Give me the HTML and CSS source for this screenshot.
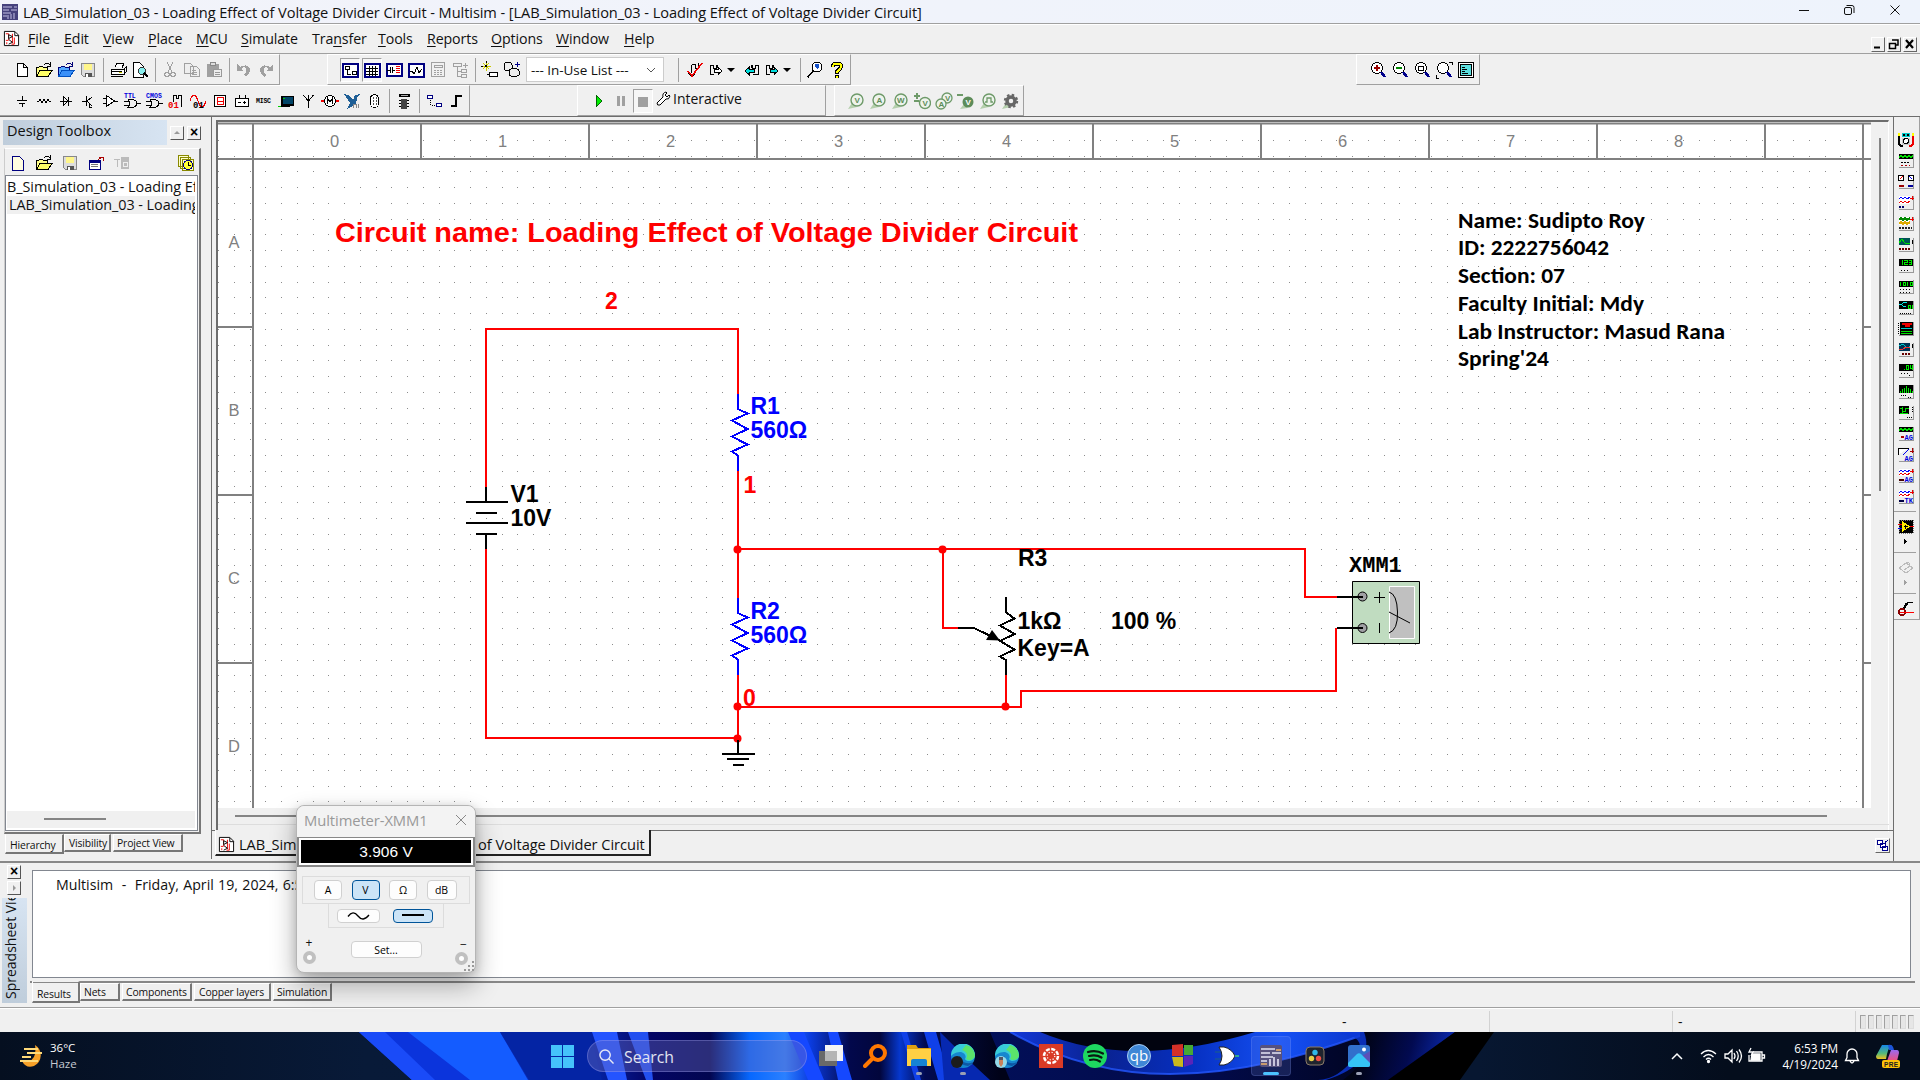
FILE: index.html
```html
<!DOCTYPE html>
<html lang="en">
<head>
<meta charset="utf-8">
<title>LAB_Simulation_03 - Multisim</title>
<link rel="stylesheet" href="styles.css">
</head>
<body>
<svg class="defs" aria-hidden="true">
<defs>
<symbol id="doc" viewBox="0 0 18 18"><path d="M4.5 2.500h6l4 4v9h-10z M10.500 2.500v4h4" fill="#fff" stroke="#000"/></symbol>
<symbol id="open" viewBox="0 0 18 18"><path d="M1.500 14.500v-8h2l1-1h3l1 1h4v3" fill="#ff8" stroke="#000"/><path d="M1.500 15.500l3.500-6h12l-4 6z" fill="#ff6" stroke="#000"/><path d="M9 4q3-3 6 0M15.500 1v4h-4" fill="none" stroke="#000"/></symbol>
<symbol id="openb" viewBox="0 0 18 18"><path d="M1.500 14.500v-8h2l1-1h3l1 1h4v3" fill="#5af" stroke="#007"/><path d="M1.500 15.500l3.500-6h12l-4 6z" fill="#3a90f8" stroke="#0050c0"/><path d="M9 4q3-3 6 0M15.500 1v4h-4" fill="none" stroke="#007"/></symbol>
<symbol id="save" viewBox="0 0 18 18"><path d="M2.500 2.500h13v13h-11l-2-2z" fill="#ddd" stroke="#888"/><path d="M5 3h8v6h-8z" fill="#fff68a"/><path d="M6 12h7v4h-7z" fill="#555"/><path d="M7 13h2v3h-2z" fill="#fff"/></symbol>
<symbol id="ckt" viewBox="0 0 18 18"><path d="M1.500 1.500h11l4 4v11h-15z" fill="#fff" stroke="#000"/><path d="M12.500 2v4h4" fill="none" stroke="#000"/><path d="M3 4h3v7h-3M10 4v10M12 8v7h-3M4 15v-2" fill="none" stroke="#e00"/><path d="M6 5l4 2-4 2zM6 10l4 3-4 2" fill="#fff" stroke="#000"/></symbol>
<symbol id="lens" viewBox="0 0 18 18"><circle cx="8" cy="7" r="5.500" fill="#fff" stroke="#000"/><path d="M12 11l4 5" stroke="#00008b" stroke-width="2.500"/></symbol>
<symbol id="inst" viewBox="0 0 16 15"><path d="M0 0h16v15h-16z" fill="#eee"/><path d="M.5 14.500h15v-14" fill="none" stroke="#999"/></symbol>
<symbol id="vprobe" viewBox="0 0 18 18"><path d="M1 17l4-6 5 4z" fill="#b5cfad"/><circle cx="10" cy="8" r="6" fill="#eef3ec" stroke="#6e9a69" stroke-width="1.400"/></symbol>
<symbol id="edge" viewBox="0 0 24 24"><circle cx="12" cy="12" r="12" fill="#1687cf"/><path d="M0 12a12 12 0 0 1 24-1c0 6-8 8-10 4 2-3-1-7-5-7-5 0-8 3-9 4z" fill="#38cbd8"/><path d="M15 1a12 12 0 0 1 9 10c0 5-6 6-9 4 3-5-1-8-4-9z" fill="#5be36b"/><path d="M8 12c-2 5 2 9 9 10 3-1 5-3 5-4-6 3-12 0-12-5z" fill="#0d58a6"/></symbol>
</defs>
</svg>

<header class="titlebar">
<svg class="appicon" viewBox="0 0 16 16"><path d="M0 0h16v16h-16z" fill="#46417c"/><path d="M1 3h9M1 6h6M9 6h6M1 9h8M12 3h3M1 12h4M6 11v4M9 10v5M12 9v6" stroke="#c3c0e4"/></svg>
<span class="titletext">LAB_Simulation_03 - Loading Effect of Voltage Divider Circuit - Multisim - [LAB_Simulation_03 - Loading Effect of Voltage Divider Circuit]</span>
<svg class="winctl" viewBox="0 0 110 22" fill="none" stroke="#111"><path d="M5 10.500h10"/><rect x="50.500" y="7.500" width="7" height="7" rx="1.500"/><path d="M52.500 5.500h5.500q2 0 2 2v5.500"/><path d="M96.500 5.500l9 9M105.500 5.500l-9 9"/></svg>
</header>

<nav class="menubar">
<svg class="menuicon"><use href="#ckt"/></svg>
<div class="menus"><span><u>F</u>ile</span><span><u>E</u>dit</span><span><u>V</u>iew</span><span><u>P</u>lace</span><span><u>M</u>CU</span><span><u>S</u>imulate</span><span>Tra<u>n</u>sfer</span><span><u>T</u>ools</span><span><u>R</u>eports</span><span><u>O</u>ptions</span><span><u>W</u>indow</span><span><u>H</u>elp</span></div>
<div class="mdictl"><i><svg viewBox="0 0 12 12"><path d="M2 9.500h6" stroke="#000" stroke-width="2"/></svg></i><i><svg viewBox="0 0 12 12"><path d="M4 2h6v5h-2M1.500 5.500h6v5h-6z" fill="none" stroke="#000" stroke-width="1.500"/></svg></i><i><svg viewBox="0 0 12 12"><path d="M2 2l7 8M9 2l-7 8" stroke="#000" stroke-width="2.200"/></svg></i></div>
</nav>

<div class="row">
<div class="bar bar-std">
<svg><use href="#doc"/></svg><svg><use href="#open"/></svg><svg><use href="#openb"/></svg><svg><use href="#save"/></svg><b></b>
<svg viewBox="0 0 18 18"><path d="M6 6l2-4h7l-2 5M2 8h13v5h-13z" fill="#fff" stroke="#000"/><path d="M2 15h12M15 8l2-2v5l-2 2M3 10h10" stroke="#000" fill="none"/><path d="M10 11h3" stroke="#cc0"/></svg>
<svg viewBox="0 0 18 18"><path d="M2.500 1.500h6l4 4v11h-10z" fill="#fff" stroke="#000"/><circle cx="11" cy="10" r="3.500" fill="#8ee" stroke="#333"/><path d="M13 12l4 4" stroke="#000" stroke-width="2.500"/></svg><b></b>
<svg viewBox="0 0 18 18" fill="none" stroke="#a0a0a0" stroke-width="1.300"><path d="M6 1l5 10M12 1l-5 10"/><circle cx="6" cy="13.500" r="2.200"/><circle cx="12" cy="13.500" r="2.200"/></svg>
<svg viewBox="0 0 18 18" fill="#eee" stroke="#a0a0a0"><path d="M1.500 2.500h6l3 3v7h-9zM7.500 5.500h6l3 3v7h-9zM9 9h4M9 11h5M9 13h5"/></svg>
<svg viewBox="0 0 18 18"><path d="M2 3h12v13h-12z" fill="#a0a0a0"/><path d="M5.500 1.500h5v3h-5z" fill="#ddd" stroke="#888"/><path d="M8.500 8.500h8v7h-8zM10 11h5M10 13h5" fill="#eee" stroke="#999"/></svg><b></b>
<svg viewBox="0 0 18 18"><path d="M2 3v7h7l-3-2c4-5 8 0 3 6l2 2c8-7 3-15-6-10z" fill="#a0a0a0"/></svg>
<svg viewBox="0 0 18 18"><path d="M16 3v7h-7l3-2c-4-5-8 0-3 6l-2 2c-8-7-3-15 6-10z" fill="#a0a0a0"/></svg>
</div>
<div class="bar bar-main">
<svg class="on" viewBox="0 0 18 18"><path d="M1.500 2.500h15v13h-15z" fill="#fff" stroke="#000080" stroke-width="2"/><path d="M4 5.500h4v3h-4zM11 10.500h4v3h-4zM6 9v4h4" fill="none" stroke="#000"/></svg>
<svg class="on" viewBox="0 0 18 18"><path d="M1.500 2.500h15v13h-15z" fill="#fff" stroke="#000080" stroke-width="2"/><path d="M3 7.500h12M3 10.500h12M3 13h12M6.500 5v10M9.500 5v10M12.500 5v10" stroke="#000"/></svg>
<svg viewBox="0 0 18 18"><path d="M1.500 2.500h15v12h-15z" fill="#fff" stroke="#000080" stroke-width="2"/><path d="M2 9h3M5.500 6v6M7.500 6v6M8 9h2" stroke="#000"/><path d="M11 5.500h4M11 7.500h4M11 9.500h4M11 11.500h4" stroke="#e00"/></svg>
<svg viewBox="0 0 18 18"><path d="M1.500 2.500h15v13h-15z" fill="#fff" stroke="#000080" stroke-width="2"/><path d="M3 10h2l2 3 3-7 2 6 3-4" fill="none" stroke="#000"/></svg>
<svg viewBox="0 0 18 18" fill="none" stroke="#a0a0a0"><path d="M2.500 1.500h13v14h-13zM5 4h8v2h-8z"/><path d="M5 9h2M8 9h2M11 9h2M5 11h2M8 11h2M11 11h2M5 13h2M8 13h2M11 13h2"/></svg>
<svg viewBox="0 0 18 18" fill="none" stroke="#a0a0a0"><path d="M2.500 2.500h8v3h-8zM10.500 8.500h5v3h-5zM10.500 13.500h5v3h-5zM6 6v9h4M6 10h4M14 2v5M12 4h5"/></svg><b></b>
<svg viewBox="0 0 18 18"><path d="M5 1v9M1 5h9M2 2l6 6M8 2l-6 6" stroke="#cc0"/><path d="M4 4h2v2h-2zM5 0h1v2h-1zM0 5h2v1h-2z"/><path d="M8.500 11.500h8v4h-8zM6 13h2" fill="#fff" stroke="#000"/></svg>
<svg viewBox="0 0 18 18"><g fill="#eee" stroke="#000"><ellipse cx="5" cy="4" rx="4" ry="2.500"/><path d="M1 4v4q4 4 8 0v-4"/><ellipse cx="11" cy="10" rx="5" ry="2.500"/><path d="M6 10v4q5 4 10 0v-4"/></g><path d="M14 1v5M11.500 3.500h5" stroke="#008"/></svg>
<div class="combo">--- In-Use List ---<svg viewBox="0 0 10 10"><path d="M1 3l4 4 4-4" fill="none" stroke="#555"/></svg></div><b class="wideb"></b>
<svg viewBox="0 0 18 18"><path d="M5 12v-8M6 3h3v4h3v-5M2 12l4 4 3-3" fill="none" stroke="#000"/><path d="M2 10l4 5L16 2" fill="none" stroke="#e00" stroke-width="1.600"/></svg>
<svg viewBox="0 0 18 18"><path d="M6 13h-4v-9h3v3h3v-3h1v3" fill="none" stroke="#000"/><path d="M6 8.500h4v-2l4 3.500-4 3.500v-2h-4z" fill="#fff" stroke="#000"/></svg><i class="dd"></i>
<svg viewBox="0 0 18 18"><path d="M11 13h5v-9h-3v3h-3v-3h-1v3" fill="none" stroke="#000"/><path d="M12 8.500h-5v-2l-4 3.500 4 3.500v-2h5z" fill="#0dd" stroke="#000"/></svg>
<svg viewBox="0 0 18 18"><path d="M6 13h-4v-9h3v3h3v-3h1v3" fill="none" stroke="#000"/><path d="M6 8.500h4v-2l4 3.500-4 3.500v-2h-4z" fill="#0dd" stroke="#000"/></svg><i class="dd"></i><b></b>
<svg viewBox="0 0 18 18"><circle cx="11" cy="6" r="5" fill="#fff" stroke="#000"/><path d="M9 3h4v3l-2 2-2-3z" fill="#1450c8"/><path d="M7.500 9.500l-6 7" stroke="#000" stroke-width="1.600"/></svg>
<svg viewBox="0 0 18 18"><path d="M5 6q0-3.500 4-3.500t4 3q0 2-4 5v2M9 14v3" fill="none" stroke="#000" stroke-width="4"/><path d="M5 6q0-3.500 4-3.500t4 3q0 2-4 5v1M9 14.500v2" fill="none" stroke="#ff0" stroke-width="2"/></svg>
</div>
<div class="bar bar-zoom">
<svg viewBox="0 0 18 18"><use href="#lens"/><path d="M5 7h6M8 4v6" stroke="#900" stroke-width="2"/></svg>
<svg viewBox="0 0 18 18"><use href="#lens"/><path d="M5 7h6" stroke="#080" stroke-width="2"/></svg>
<svg viewBox="0 0 18 18"><use href="#lens"/><path d="M5.500 5h5v4h-5z" fill="none" stroke="#000"/></svg>
<svg viewBox="0 0 18 18"><use href="#lens"/><path d="M14 1h3v3M1 14v3h3" fill="none" stroke="#000"/></svg>
<svg viewBox="0 0 18 18"><path d="M1.500 1.500h15v15h-15z" fill="#fff" stroke="#000"/><path d="M3.500 3.500h11v11h-11z" fill="#5ce0e0" stroke="#000"/><path d="M5 6.500h3M5 8.500h5M5 10.500h3M5 12.500h6" stroke="#000"/></svg>
</div>
</div>

<div class="row row2">
<div class="bar bar-comp">
<svg viewBox="0 0 18 18"><path d="M9.500 4v4M4 8.500h10M6 11.500h6M9.500 12v3" stroke="#000" fill="none"/></svg>
<svg viewBox="0 0 18 18"><path d="M2 9h2l1-2 2 4 2-4 2 4 2-4 1 2h2" stroke="#000" fill="none"/></svg>
<svg viewBox="0 0 18 18"><path d="M3 9.500h12M6.500 5v8l5-4zM11.500 5v9" stroke="#000" fill="none"/></svg>
<svg viewBox="0 0 18 18"><path d="M3 9.500h4M7.500 4v10M8 9l5-4M8 9l5 5M10 12v3h3" stroke="#000" fill="none"/></svg>
<svg viewBox="0 0 18 18"><path d="M5.500 3.500v11l8-5.500zM2 6.500h3M2 11.500h3M13 9.500h4" stroke="#000" fill="#fff"/></svg>
<svg viewBox="0 0 18 18"><path d="M5 7.500h4q5 1 5 4t-5 4h-4q3-4 0-8M1 9.500h5M1 13.500h5M14 11.500h4" stroke="#000" fill="none"/><text x="1" y="6" class="pix" fill="#00d">TTL</text></svg>
<svg viewBox="0 0 18 18"><path d="M5 7.500h4q5 1 5 4t-5 4h-4q3-4 0-8M1 9.500h5M1 13.500h5M14 11.500h4" stroke="#000" fill="none"/><text x="1" y="6" class="pix" fill="#00d" textLength="16">CMOS</text></svg>
<svg viewBox="0 0 18 18"><path d="M6.500 10v-7h3v3h2v-3h3v12" stroke="#000" fill="none"/><text x="1" y="16" class="pixb" fill="#e00">01</text></svg>
<svg viewBox="0 0 18 18"><path d="M1 9q4-12 8 0t8 0" stroke="#e00" fill="none"/><text x="4" y="16" class="pixb">01</text></svg>
<svg viewBox="0 0 18 18"><path d="M3.500 3.500h11v11h-11z" stroke="#000" fill="#fff"/><path d="M6 5.500h6v3.500h-6zM6 9h6v3.500h-6z" stroke="#e00" fill="none"/></svg>
<svg viewBox="0 0 18 18"><path d="M2.500 6.500h13v8h-13z" stroke="#000" fill="#fff"/><path d="M6.500 3v4M12.500 3v4M5 10.500h3M10 10.500h3M11.500 9v3" stroke="#000"/></svg>
<svg viewBox="0 0 18 18"><text x="1" y="11" class="pix" textLength="15">MISC</text></svg>
<svg viewBox="0 0 18 18"><path d="M4 4h13v10h-13zM1 14h12v1h-12z"/><path d="M6 5h10v7h-10z" fill="#046"/><path d="M6 6h2M1 14h3" stroke="#0c0"/></svg>
<svg viewBox="0 0 18 18"><path d="M9.500 16v-7L4 3M9.500 9l5-6M9.500 3v5" stroke="#000" fill="none"/></svg>
<svg viewBox="0 0 18 18"><path d="M0 9h4M14 9h4" stroke="#e00" stroke-width="2"/><circle cx="9" cy="9" r="5.500" fill="#fff" stroke="#000"/><path d="M6.500 12v-6l2.500 4 2.500-4v6" fill="none" stroke="#000"/></svg>
<svg viewBox="0 0 18 18"><path d="M1 2l6 2 3 4 2-5 5-1-3 4-1 6-5 3-4 2 3-6z" fill="#1f5f96"/><path d="M10 16v-4h3v4M15 12v4" fill="none" stroke="#888"/></svg>
<svg viewBox="0 0 18 18"><rect x="5.500" y="2.500" width="8" height="13" rx="4" fill="#fff" stroke="#000"/><path d="M8.500 5v8M11.500 5v8" stroke="#555" stroke-dasharray="2 1"/></svg><b></b>
<svg viewBox="0 0 18 18"><path d="M4 2h11v3h-11z"/><path d="M6 3.500h7" stroke="#aaa"/><path d="M6 7h6v10h-6z" fill="#444"/><path d="M4 8.500h10M4 11.500h10M4 14.500h10" stroke="#000" stroke-dasharray="2 6"/></svg><b></b>
<svg viewBox="0 0 18 18"><path d="M2.500 3.500h5v3h-5zM11.500 11.500h5v3h-5z" stroke="#000080" stroke-width="1.500" fill="#fff"/><path d="M5.500 8v5h5" fill="none" stroke="#000" stroke-dasharray="1 1"/></svg>
<svg viewBox="0 0 18 18"><path d="M4 14h5v-10h6" fill="none" stroke="#000" stroke-width="2"/></svg>
</div>
<div class="bar bar-sim">
<svg viewBox="0 0 18 18"><path d="M6 3v12l6-6z" fill="#0e0" stroke="#060"/></svg>
<svg viewBox="0 0 18 18"><path d="M5 4h3v10h-3zM10 4h3v10h-3z" fill="#a0a0a0"/></svg>
<svg class="on" viewBox="0 0 18 18"><path d="M4 5h10v10h-10z" fill="#a0a0a0"/></svg>
<svg class="wrench" viewBox="0 0 18 18"><path d="M3 13l6-6q-1-4 3-5l1 1-2 2 2 2 2-2 1 1q-1 4-4 3l-6 6q-3 1-3-2z" fill="#fff" stroke="#000"/></svg>
<span class="inter">Interactive</span>
</div>
<div class="bar bar-probe">
<svg viewBox="0 0 18 18"><use href="#vprobe"/><text x="7.500" y="11" class="pr">V</text></svg>
<svg viewBox="0 0 18 18"><use href="#vprobe"/><text x="7.500" y="11" class="pr">A</text></svg>
<svg viewBox="0 0 18 18"><use href="#vprobe"/><text x="6" y="11" class="pr">W</text></svg>
<svg viewBox="0 0 18 18"><path d="M1 4h6M4 1v6M1 9h5" stroke="#6e9a69" stroke-width="2"/><circle cx="12" cy="11" r="5.500" fill="#eef3ec" stroke="#6e9a69" stroke-width="1.400"/><text x="9.500" y="14" class="pr">V</text></svg>
<svg viewBox="0 0 18 18"><g fill="#eef3ec" stroke="#6e9a69" stroke-width="1.300"><circle cx="12" cy="6" r="5"/><circle cx="6" cy="12" r="5"/></g><text x="10" y="9" class="pr">V</text><text x="3.500" y="15" class="pr">A</text></svg>
<svg viewBox="0 0 18 18"><path d="M0 3h6" stroke="#6e9a69" stroke-width="2"/><path d="M3 17l4-5 4 4z" fill="#b5cfad"/><circle cx="11" cy="10" r="5.500" fill="#5d8c59"/><text x="8.500" y="13" class="pr w">V</text></svg>
<svg viewBox="0 0 18 18"><use href="#vprobe"/><path d="M6 10h2v-4h4v4h2" fill="none" stroke="#6e9a69" stroke-width="1.300"/></svg>
<svg viewBox="0 0 18 18"><path d="M1 17l4-6 5 4z" fill="#b5cfad"/><circle cx="10" cy="9" r="4" fill="none" stroke="#666" stroke-width="3.500"/><circle cx="10" cy="9" r="6.200" fill="none" stroke="#666" stroke-width="2" stroke-dasharray="2.500 2.370"/></svg>
</div>
</div>

<main class="work">
<aside class="toolbox">
<div class="tbhead"><span>Design Toolbox</span><i class="sb up"></i><i class="sb x">×</i></div>
<div class="tbframe">
<div class="tbicons"><svg viewBox="0 0 18 18"><path d="M3.500 2.500h7l4 4v10h-11z" fill="#fffde0" stroke="#000080"/></svg><svg><use href="#open"/></svg><svg><use href="#save"/></svg><svg viewBox="0 0 18 18"><path d="M2.500 6.500h11v9h-11z" fill="#fff" stroke="#000080"/><path d="M2 7.500h12" stroke="#000080" stroke-width="2"/><path d="M4 10.500h7M4 12.500h7" stroke="#777"/><path d="M12 3h4v4M15 3l-4 3" stroke="#a00" fill="none"/></svg><svg viewBox="0 0 18 18"><path d="M1 5.500h6M4.500 5v8" stroke="#bbb"/><path d="M8 3h8v12h-8z" fill="#bbb"/><path d="M10 8h4v4h-4z" fill="none" stroke="#eee"/></svg><svg class="last" viewBox="0 0 18 18"><path d="M1.500 1.500h10v11h-10zM3.500 3.500h10v11h-10zM5.500 5.500h11v11h-11z" fill="#ffc" stroke="#880"/><circle cx="11" cy="11" r="4.500" fill="#ff3" stroke="#000080"/><path d="M11 8v3h3" fill="none" stroke="#000"/></svg></div>
<div class="tree"><div class="ti">B_Simulation_03 - Loading Effect</div><div class="ti sel">LAB_Simulation_03 - Loading Effect</div><div class="hs"><i></i></div></div>
</div>
<div class="tabs lt"><span class="act">Hierarchy</span><span>Visibility</span><span>Project View</span></div>
</aside>

<section class="mdi">
<div class="docframe">
<svg class="canvas" width="1653" height="686" viewBox="218 122 1653 686">
<defs>
<pattern id="grid" x="234" y="140" width="63" height="63" patternUnits="userSpaceOnUse"><path d="M0 0h1v1h-1zM16 0h1v1h-1zM31 0h1v1h-1zM47 0h1v1h-1zM0 16h1v1h-1zM16 16h1v1h-1zM31 16h1v1h-1zM47 16h1v1h-1zM0 31h1v1h-1zM16 31h1v1h-1zM31 31h1v1h-1zM47 31h1v1h-1zM0 47h1v1h-1zM16 47h1v1h-1zM31 47h1v1h-1zM47 47h1v1h-1z" fill="#8c8c8c"/></pattern>
</defs>
<path d="M218 122h1653v686h-1653z" fill="#fff"/>
<path d="M218 126h1641v682h-1641z" fill="url(#grid)"/>
<path d="M218 123.500h1653M218 159h1653M253 124v684M1863 124v684M421 124v35M589 124v35M757 124v35M925 124v35M1093 124v35M1261 124v35M1429 124v35M1597 124v35M1765 124v35M218 327h35M218 495h35M218 663h35M1863 327h8M1863 495h8M1863 663h8" stroke="#808080" stroke-width="2" fill="none"/>
<g class="rul"><text x="334.500" y="147">0</text><text x="502.500" y="147">1</text><text x="670.500" y="147">2</text><text x="838.500" y="147">3</text><text x="1006.500" y="147">4</text><text x="1174.500" y="147">5</text><text x="1342.500" y="147">6</text><text x="1510.500" y="147">7</text><text x="1678.500" y="147">8</text><text x="234" y="248">A</text><text x="234" y="416">B</text><text x="234" y="584">C</text><text x="234" y="752">D</text></g>
<g fill="none" stroke-width="2" shape-rendering="crispEdges">
<path class="wire" d="M486 487V329H738V394M738 470V598M738 675V738H486V549M738 549H1305V597H1337M943 549V628H959M1336 628V691H1021V707H738M1006 707V675"/>
<path stroke="#00f" d="M738 393.500V409l9.500 4.500-15.500 7 15.500 8.500-15.500 7.500 15.500 8-15.500 7 6 4V471M738 598V613l9.500 4.500-15.500 7 15.500 8.500-15.500 7.500 15.500 8-15.500 7 6 4V675"/>
<path stroke="#000" d="M486 487V502M466 502h42M475.500 513h21.500M466 523h42M475.500 534h21.500M486 534V549M738 739V754M722 754h33M727 759h22M733 765h11M1006 597V612.500l8.500 6-14.500 7 14.500 8.500-14.500 7 14.500 8.500-14.500 7 6 3.500V675M958 628H974L1000 640.500M1337 597H1363M1337 628H1363"/>
</g>
<path d="M986 640l6-10 8 10.500z"/>
<g fill="#f00"><circle cx="737.500" cy="549.500" r="4"/><circle cx="737.500" cy="706.500" r="4"/><circle cx="737.500" cy="738.500" r="4"/><circle cx="942.500" cy="549.500" r="4"/><circle cx="1005.500" cy="706.500" r="4"/></g>
<path d="M738 740v14" stroke="#000" stroke-width="2"/>
<path d="M1352.500 581.500h67v62h-67z" fill="#c0dcc0" stroke="#000"/>
<path d="M1389.500 586.500h25v52h-25z" fill="#c0c0c0" stroke="#fff"/>
<g fill="#a0a0a4" stroke="#000"><circle cx="1362.500" cy="596.500" r="4.500"/><circle cx="1362.500" cy="628" r="4.500"/></g>
<path d="M1350 597h13M1350 628h13" stroke="#000" stroke-width="2"/>
<path d="M1374 597.500h11M1379.500 592v11M1379.500 623v10M1389 592q8 2 8.500 20t-8.500 21M1389 612l21 11" stroke="#000" fill="none"/>
<g class="lab">
<text x="335" y="242" class="head" textLength="743" lengthAdjust="spacingAndGlyphs">Circuit name: Loading Effect of Voltage Divider Circuit</text>
<g fill="#f00"><text x="605" y="309">2</text><text x="743.500" y="493">1</text><text x="743" y="706">0</text></g>
<g fill="#00f"><text x="750.500" y="414">R1</text><text x="750.500" y="438">560Ω</text><text x="750.500" y="619">R2</text><text x="750.500" y="643">560Ω</text></g>
<text x="510.500" y="501.500">V1</text><text x="510.500" y="526">10V</text>
<text x="1018" y="566">R3</text><text x="1017.500" y="629">1kΩ</text><text x="1111" y="629">100 %</text><text x="1017.500" y="655.500">Key=A</text>
</g>
<text x="1349" y="572" class="mono">XMM1</text>
<g class="info"><text x="1458" y="228" textLength="187" lengthAdjust="spacingAndGlyphs">Name: Sudipto Roy</text><text x="1458" y="255" textLength="151" lengthAdjust="spacingAndGlyphs">ID: 2222756042</text><text x="1458" y="283" textLength="107" lengthAdjust="spacingAndGlyphs">Section: 07</text><text x="1458" y="311" textLength="186" lengthAdjust="spacingAndGlyphs">Faculty Initial: Mdy</text><text x="1458" y="339" textLength="267" lengthAdjust="spacingAndGlyphs">Lab Instructor: Masud Rana</text><text x="1458" y="366" textLength="91" lengthAdjust="spacingAndGlyphs">Spring'24</text></g>
</svg>
<div class="vscroll"><i></i></div>
<div class="hscroll"><i></i></div>
</div>
<div class="doctabs"><div class="doctab"><svg><use href="#ckt"/></svg><span>LAB_Simulation_03 - Loading Effect of Voltage Divider Circuit</span></div><i class="cascade"><svg viewBox="0 0 13 13"><path d="M1.500 1.500h5v4h-5zM4.500 4.500h5v4h-5zM6.500 7.500h5v4h-5z" fill="#fff" stroke="#00008b"/><path d="M9 5V2M9 4l3-3" stroke="#00008b"/></svg></i></div>
</section>

<aside class="instruments">
<svg viewBox="0 0 16 15"><path d="M0 0h16v15h-16z" fill="#eee"/><path d="M1 1v4M15 1v4" stroke="#ff0" stroke-width="2"/><path d="M1 4v8l2 2h2" stroke="#000" stroke-width="2" fill="none"/><path d="M15 4v8l-2 2h-2" stroke="#e00" stroke-width="2" fill="none"/><path d="M4 1h8v4h-8z" fill="#0cc"/><path d="M5 2h2v2h-2zM9 2h2v2h-2z"/><path d="M4 6h8v7h-8z" fill="#ccc"/><circle cx="8" cy="9" r="2.500" fill="#fff" stroke="#000"/></svg>
<svg viewBox="0 0 16 15"><use href="#inst"/><path d="M1 1h14v5h-14z"/><path d="M1 5l2-3 2 3 2-3 2 3 2-3 2 3 2-3" stroke="#0d0" fill="none"/><path d="M3 9.500h9" stroke="#000" stroke-dasharray="2 1"/><path d="M3 12.500h9" stroke="#a00" stroke-dasharray="2 2"/></svg>
<svg viewBox="0 0 16 15"><use href="#inst"/><path d="M.5 1.500h5v5h-5zM10.500 1.500h5v5h-5z" fill="#fff" stroke="#000"/><path d="M2 5l3-3" stroke="#e00"/><path d="M11 2l3 3" stroke="#00e"/><path d="M1 12h5" stroke="#900" stroke-width="2"/><path d="M10 12h5" stroke="#009" stroke-width="2"/></svg>
<svg viewBox="0 0 16 15"><use href="#inst"/><path d="M1 1h11v8h-11z" fill="#fff"/><path d="M1 4l2-2 2 2 2-2 2 2 3-2" stroke="#00f" fill="none"/><path d="M1 8l2-2 2 2 2-2 2 2 3-2M14.500 1v4M12 3.500h4" stroke="#e00" fill="none"/><path d="M1 12h5" stroke="#006" stroke-width="2" stroke-dasharray="2 1"/></svg>
<svg viewBox="0 0 16 15"><use href="#inst"/><path d="M1 1h11v8h-11z" fill="#fff"/><path d="M1 4l2-2 2 2 2-2 2 2 3-2" stroke="#080" stroke-width="2" fill="none"/><path d="M1 8l2-2 2 2 2-2 2 2 3-2" stroke="#da0" stroke-width="2" fill="none"/><path d="M14.500 1v4M12 3.500h4" stroke="#e00"/><path d="M1 12h13" stroke="#222" stroke-width="2" stroke-dasharray="2 1"/></svg>
<svg viewBox="0 0 16 15"><use href="#inst"/><path d="M1 1h11v7h-11z" fill="#055"/><path d="M1 6l3-4 3 4h5" stroke="#0d0" fill="none"/><path d="M14.500 3v4" stroke="#000"/><path d="M1 12h12" stroke="#600" stroke-width="2" stroke-dasharray="2 1"/></svg>
<svg viewBox="0 0 16 15"><use href="#inst"/><path d="M1 1h14v7h-14z"/><path d="M4.500 2v5M6 2.500h3v2h-2.500v2h3M11 2.500h2.500v4h-3M11 4.500h3" stroke="#0e0" fill="none"/><path d="M3 12.500h9" stroke="#000" stroke-dasharray="1 2"/></svg>
<svg viewBox="0 0 16 15"><use href="#inst"/><path d="M1 2h14v6h-14z"/><path d="M2.500 3v4M5 3.500h2v3h-2zM9.500 3v4M12 3.500h2v3h-2z" stroke="#0e0" fill="none"/><path d="M2 10.500h12M2 13.500h12" stroke="#000" stroke-dasharray="1 2"/></svg>
<svg viewBox="0 0 16 15"><use href="#inst"/><path d="M1 1h14v8h-14z"/><path d="M1 4.500h3q0-2 3-2h2M4 4.500q0 2 4 2" stroke="#0ee" fill="none"/><path d="M10 5.500h2v3h-2zM14.500 5v4" stroke="#0e0" fill="none"/><path d="M2 13.500h12" stroke="#000" stroke-dasharray="1 1"/></svg>
<svg viewBox="0 0 16 15"><use href="#inst"/><path d="M2 1h13v13h-13z"/><path d="M4 2h10v2h-2v2h-5v-2h-3z" fill="#e00"/><path d="M3 7.500h11" stroke="#0cc"/><path d="M3 10.500h11M3 12.500h11" stroke="#0d0"/><path d="M.5 2v12" stroke="#000" stroke-dasharray="1 1"/></svg>
<svg viewBox="0 0 16 15"><use href="#inst"/><path d="M1 1h11v8h-11z" fill="#035"/><path d="M1 4q4-3 6 0t5 0" stroke="#0cc" fill="none"/><path d="M1 7h4l3-2h4" stroke="#e33" fill="none"/><path d="M14.500 2v4" stroke="#000"/><path d="M4 12h9" stroke="#600" stroke-width="2" stroke-dasharray="2 1"/></svg>
<svg viewBox="0 0 16 15"><use href="#inst"/><path d="M1 1h14v7h-14z"/><path d="M6 6.500h1M8.500 2.500h2v4h-2zM12.500 2v3h2M14.500 2v5" stroke="#0e0" fill="none"/><path d="M3 10.500h8M11 12.500h2" stroke="#000" stroke-dasharray="1 2"/></svg>
<svg viewBox="0 0 16 15"><use href="#inst"/><path d="M1 1h14v8h-14z"/><path d="M2.500 9v-2M4.500 9v-4M6.500 9v-5M8.500 9v-7M10.500 9v-5M12.500 9v-4M14.500 9v-2" stroke="#0e0"/><path d="M3 11.500h5M10 13.500h4" stroke="#000" stroke-dasharray="1 1"/></svg>
<svg viewBox="0 0 16 15"><use href="#inst"/><path d="M1 1h10v8h-10z"/><path d="M2 3.500h2.500v3h3v-3h3M2 8.500h8M4.500 2v6" stroke="#0d0" fill="none"/><path d="M14.500 2v6M9 12.500h5" stroke="#000" stroke-dasharray="1 1"/></svg>
<svg viewBox="0 0 16 15"><use href="#inst"/><path d="M1 1h14v5h-14z"/><path d="M1 5l2-3 2 3 2-3 2 3 2-3 2 3 2-3" stroke="#0d0" fill="none"/><path d="M3 11h3" stroke="#a00" stroke-width="2"/><text x="6.500" y="13.500" class="ag">AG</text></svg>
<svg viewBox="0 0 16 15"><use href="#inst"/><path d="M.5 7.500v-6h10" fill="#fff" stroke="#000"/><path d="M5 8l6-6" stroke="#00e"/><path d="M14.500 1v5M12 4.500h4" stroke="#a00"/><text x="6.500" y="13.500" class="ag">AG</text></svg>
<svg viewBox="0 0 16 15"><use href="#inst"/><path d="M1 1h11v7h-11z" fill="#fff"/><path d="M1 4l2-2 2 2 2-2 2 2 3-2" stroke="#00f" fill="none"/><path d="M1 7l2-2 2 2 2-2 2 2 3-2M14.500 1v4M12 3.500h4" stroke="#e00" fill="none"/><path d="M1 12h5" stroke="#400" stroke-width="2"/><text x="6.500" y="13.500" class="ag">AG</text></svg>
<svg viewBox="0 0 16 15"><use href="#inst"/><path d="M1 1h11v7h-11z" fill="#fff"/><path d="M1 4l2-2 2 2 2-2 2 2 3-2" stroke="#00f" fill="none"/><path d="M1 7l2-2 2 2 2-2 2 2 3-2M14.500 1v4M12 3.500h4" stroke="#e00" fill="none"/><path d="M1 12h5" stroke="#004" stroke-width="2"/><text x="6.500" y="13.500" class="ag">TK</text></svg>
<b></b>
<svg viewBox="0 0 16 15"><path d="M1 1h14v13h-14z" stroke="#777" stroke-dasharray="1 1"/><path d="M4 2v11l8-5.500z" fill="#fe0"/><path d="M0 5.500h4M12 7.500h4" stroke="#e00"/><path d="M0 9.500h4" stroke="#00e"/><path d="M6 7.500h4M7.500 6v4" stroke="#000"/></svg>
<svg class="ar" viewBox="0 0 16 9"><path d="M6 1v7l3-3.500z"/></svg>
<b></b>
<svg viewBox="0 0 16 15"><path d="M1 8l7-5 7 5-7 5zM8 3q4-2 4 3l-6 4" fill="none" stroke="#bbb"/></svg>
<svg class="ar" viewBox="0 0 16 9"><path d="M6 1v7l3-3.500z" fill="#a0a0a0"/></svg>
<b></b>
<svg class="probe" viewBox="0 0 16 15"><path d="M5 9l4-7" stroke="#000" stroke-width="2.500"/><path d="M9 2q3-2 6 0" stroke="#000" fill="none"/><circle cx="4" cy="11" r="3" fill="none" stroke="#800" stroke-width="1.800"/><path d="M2 11.500h14" stroke="#f00"/></svg>
</aside>
</main>

<section class="sheet">
<div class="sidecap"><i class="sb x">×</i><i class="sb rt"></i><div class="vcap"><span>Spreadsheet View</span></div></div>
<div class="sheetmain">
<div class="log">Multisim&nbsp; -&nbsp; Friday, April 19, 2024, 6:53:06 PM</div>
<div class="tabs bt"><span class="act">Results</span><span>Nets</span><span>Components</span><span>Copper layers</span><span>Simulation</span></div>
</div>
</section>

<footer class="status"><span class="c1">-</span><span class="c2"></span><span class="c3">-</span><span class="c4"><i></i><i></i><i></i><i></i><i></i><i></i><i></i></span></footer>

<footer class="taskbar">
<svg class="wall" viewBox="0 0 1920 48" preserveAspectRatio="none">
<defs>
<linearGradient id="base"><stop offset="0" stop-color="#050f20"/><stop offset=".19" stop-color="#081a38"/><stop offset=".77" stop-color="#071731"/><stop offset=".9" stop-color="#040d1c"/><stop offset="1" stop-color="#040d1c"/></linearGradient>
<linearGradient id="mid" gradientUnits="userSpaceOnUse" x1="500" y1="0" x2="1000" y2="0"><stop offset="0" stop-color="#0c33c8"/><stop offset=".2" stop-color="#0420a0"/><stop offset=".3" stop-color="#040565"/><stop offset=".42" stop-color="#020650"/><stop offset=".5" stop-color="#0768ff"/><stop offset=".57" stop-color="#2b80ff"/><stop offset=".62" stop-color="#0b3ce0"/><stop offset=".7" stop-color="#02084c"/><stop offset=".76" stop-color="#02063c"/><stop offset=".8" stop-color="#0638cf"/><stop offset=".85" stop-color="#020a50"/><stop offset=".91" stop-color="#020a3a"/><stop offset="1" stop-color="#000218"/></linearGradient>
<linearGradient id="arc" gradientUnits="userSpaceOnUse" x1="1010" y1="0" x2="1370" y2="0"><stop offset="0" stop-color="#1238d8"/><stop offset=".25" stop-color="#0a2290"/><stop offset=".5" stop-color="#062fc0"/><stop offset=".75" stop-color="#1450f4"/><stop offset="1" stop-color="#0b34c8"/></linearGradient>
<linearGradient id="low" x2="1"><stop offset="0" stop-color="#020f58"/><stop offset=".5" stop-color="#020a48"/><stop offset="1" stop-color="#00020e"/></linearGradient>
<linearGradient id="rt" gradientUnits="userSpaceOnUse" x1="1365" y1="0" x2="1450" y2="24"><stop offset="0" stop-color="#000314"/><stop offset=".55" stop-color="#020a50"/><stop offset="1" stop-color="#0b2ab0"/></linearGradient>
</defs>
<path d="M0 0h1920v48h-1920z" fill="url(#base)"/>
<path d="M359 0h660v48h-607z" fill="url(#mid)"/>
<path d="M359 0h141v48h-88z" fill="#0b34dc"/><path d="M359 0h26l50 48h-23z" fill="#1a4bf8"/><path d="M408 0h92l28 48h-58z" fill="#145cff"/>
<path d="M500 0h90l12 48h-73z" fill="#0424a4"/><path d="M592 0h25l10 48h-19z" fill="#2454ff"/><path d="M628 0h20l5 48h-7z" fill="#2350f0"/>
<path d="M788 0h16l20 48h-16zM832 0h6l14 48h-14l-10-48z" fill="#1548ff"/><path d="M901 0h6l14 48h-6zM924 0h12l14 48h-12z" fill="#1040e8"/>
<path d="M940 0q30 30 50 48h-46z" fill="#0628b0"/>
<path d="M990 0h460v48h-440z" fill="url(#low)"/>
<path d="M1010 0q75 42 160 42t190-38v-4z" fill="url(#arc)"/>
<path d="M1040 0q90 38 215 0z" fill="#01030f"/>
<path d="M1010 0q75 42 160 42t190-38" fill="none" stroke="#2458ff" stroke-width="2" opacity=".8"/>
<path d="M1365 0h90l-62 48h-50q32-24 22-48z" fill="url(#rt)"/><path d="M1340 2q26 2 18 20-20 26-40 26h8q50-16 38-48h-20z" fill="#0d38d8" opacity=".8"/>
<path d="M1455 0h39l-34 48h-72z" fill="#000"/>
</svg>
<div class="weather"><svg viewBox="0 0 24 24"><path d="M16 1a12 12 0 0 1-1 21Q7 25 3 17h7q8-2 6-16z" fill="#f7a028"/><path d="M5 5h14M8 9h15M3 13h9M1 17h18" stroke="#ffd978" stroke-width="2"/></svg><div><div>36°C</div><div class="dim">Haze</div></div></div>
<div class="center">
<svg class="win" viewBox="0 0 24 24"><path d="M0 0h11.500v11.500h-11.500zM12.500 0h11.500v11.500h-11.500zM0 12.500h11.500v11.500h-11.500zM12.500 12.500h11.500v11.500h-11.500z" fill="#45c3fb"/></svg>
<div class="search"><svg viewBox="0 0 16 16"><circle cx="6.500" cy="6.500" r="5.500" fill="none" stroke="#e8eaf6" stroke-width="1.500"/><path d="M10.500 10.500l5 5" stroke="#e8eaf6" stroke-width="1.500"/></svg>Search</div>
<div class="apps">
<span><svg viewBox="0 0 24 24"><path d="M0 7h18v15h-18z" fill="#696969"/><path d="M6 1h18v16h-18z" fill="#f4f4f4"/><path d="M6 7h12v10h-12z" fill="#b5b5b5"/></svg></span>
<span><svg viewBox="0 0 24 24"><circle cx="15" cy="9" r="7" fill="none" stroke="#ff7800" stroke-width="4"/><path d="M10 14l-8 8" stroke="#ff7800" stroke-width="4" stroke-linecap="round"/></svg></span>
<span class="run"><svg viewBox="0 0 24 24"><path d="M0 1h9l2 3h13v18h-24z" fill="#e0a010"/><path d="M0 5h24v17h-24z" fill="#ffd044"/><path d="M4 22v-5q0-2 2-2h12q2 0 2 2v5z" fill="#1683d4"/></svg></span>
<span class="run"><svg viewBox="0 0 24 24"><use href="#edge"/><circle cx="6" cy="18" r="6" fill="#1c1c1c"/></svg></span>
<span><svg viewBox="0 0 24 24"><use href="#edge"/><circle cx="6" cy="18" r="6" fill="#94d9e8"/><path d="M4 14h4v6l-2 3-2-3z" fill="#c9805a"/><path d="M4 13h4v3h-4z" fill="#556"/></svg></span>
<span><svg viewBox="0 0 24 24"><path d="M0 0h24v24h-24z" fill="#d93a26"/><circle cx="12" cy="12" r="7" fill="none" stroke="#fff" stroke-width="2.500" stroke-dasharray="4 1.500"/><circle cx="12" cy="12" r="3.800" fill="none" stroke="#fff" stroke-width="1.200" stroke-dasharray="1.200 1.800"/></svg></span>
<span><svg viewBox="0 0 24 24"><circle cx="12" cy="12" r="12" fill="#1ed760"/><path d="M5 8q8-2.500 15 1.500M6 12q7-2 12.500 1.500M7 16q5.500-1.500 10 1.500" fill="none" stroke="#0a1a10" stroke-width="2.200" stroke-linecap="round"/></svg></span>
<span><svg viewBox="0 0 24 24"><circle cx="12" cy="12" r="11.500" fill="#3f87d6" stroke="#a9cdf3"/><text x="12" y="17" class="qb">qb</text></svg></span>
<span><svg viewBox="0 0 24 24"><path d="M1 1l11-1v12h-11z" fill="#d33028"/><path d="M13 1h9v10h-9z" fill="#47a834"/><path d="M1 13h11v10l-9-1z" fill="#c9b81e"/><path d="M13 12h9v8l-9 3z" fill="#5a24b8"/></svg></span>
<span><svg viewBox="0 0 24 24"><path d="M0 8h7M0 15h7" stroke="#1d6080"/><path d="M4 3h5q8 2 11 9-3 7-11 9h-5q6-9 0-18z" fill="#fff" stroke="#222"/><path d="M20 12h4" stroke="#3ec97a" stroke-width="1.500"/></svg></span>
<span class="cur"><svg viewBox="0 0 24 24"><rect x="1" y="1" width="22" height="22" rx="2" fill="#56517e"/><path d="M2 5h14M2 9h9M13 9h9M2 13h12M2 17h6M11 15v7M15 13v9M19 15v7" stroke="#e4e2f4" stroke-width="1.600"/><path d="M17 6h5M2 20h6" stroke="#f0b46a" stroke-width="1.600"/></svg></span>
<span><svg viewBox="0 0 24 24"><rect x="3" y="3" width="18" height="18" rx="4" fill="#20242e" stroke="#8a7a68"/><circle cx="12" cy="8.500" r="2.700" fill="#30b8e8"/><circle cx="8.500" cy="14.500" r="2.700" fill="#e8d046"/><circle cx="15.500" cy="14.500" r="2.700" fill="#f04e44"/></svg></span>
<span class="run"><svg viewBox="0 0 24 24"><rect x="1" y="1" width="22" height="22" rx="3" fill="#3170cc"/><path d="M23 7v14q0 2-2 2h-18q-2 0-2-2z" fill="#5b50b8"/><path d="M1 19l9-9q2-1.500 4 0l9 9v2q0 2-2 2h-18q-2 0-2-2z" fill="#35c4f5"/><circle cx="17" cy="5.500" r="2" fill="#fff"/></svg></span>
</div>
</div>
<div class="tray">
<svg class="chev" viewBox="0 0 12 8"><path d="M1 7l5-5 5 5" fill="none" stroke="#fff" stroke-width="1.500"/></svg>
<svg class="net" viewBox="0 0 66 18" fill="none" stroke="#fff" stroke-width="1.300"><path d="M1 7q7-7 15 0M3.500 10q5-5 10 0M6 12.500q2.500-2.500 5 0"/><circle cx="8.500" cy="14.500" r="1" fill="#fff"/><path d="M25 7h3l4-4v12l-4-4h-3zM34 6q2 3 0 6M36.500 4q3.500 5 0 10M39 2.500q5 6.500 0 13"/><path d="M53 5h9v9h-13v-6M62.500 8h2v3h-2" /><path d="M52 7h8v6h-9z" fill="#fff"/><path d="M51 1l-2 4h4l-2 4"/></svg>
<div class="clock"><div>6:53 PM</div><div>4/19/2024</div></div>
<svg class="bell" viewBox="0 0 16 16"><path d="M1.500 12.500l1.500-3v-3.500a5 5 0 0 1 10 0v3.500l1.500 3zM6 13q2 4 4 0" fill="none" stroke="#fff" stroke-width="1.300"/></svg>
<svg class="copilot" viewBox="0 0 24 24"><defs><linearGradient id="cp" y2="1" x2="0"><stop stop-color="#1587e8"/><stop offset=".6" stop-color="#55b97a"/><stop offset="1" stop-color="#f0c020"/></linearGradient><linearGradient id="cq" y2="1" x2="0"><stop stop-color="#9a6af0"/><stop offset="1" stop-color="#f0507a"/></linearGradient></defs><path d="M6 1h10q-4 2-6 14h-8q-2 0-2-3z" fill="url(#cp)"/><path d="M12 1q5-1 6 5h-5z" fill="#1c54d8"/><path d="M15 6h6q2 0 2 3l-2 8h-10z" fill="url(#cq)"/><rect x="6" y="16" width="18" height="8" rx="2" fill="#ffc20a"/><text x="8" y="22.600" class="pre" textLength="14">PRE</text></svg>
</div>
</footer>

<div class="meter">
<div class="mhead"><span>Multimeter-XMM1</span><svg viewBox="0 0 12 12"><path d="M1 1l10 10M11 1l-10 10" stroke="#888"/></svg></div>
<div class="disp">3.906 V</div>
<div class="grp g1"><button>A</button><button class="p">V</button><button>Ω</button><button>dB</button></div>
<div class="grp g2"><button><svg viewBox="0 0 24 10"><path d="M1 5.500q5-7 10-.5t11-1" fill="none" stroke="#000" stroke-width="1.300"/></svg></button><button class="p"><svg viewBox="0 0 24 10"><path d="M1 4h22" stroke="#000" stroke-width="2"/></svg></button></div>
<div class="ends"><div class="term">+<i></i></div><button>Set...</button><div class="term r"><em>−</em><i></i></div></div>
<svg class="grip" viewBox="0 0 10 10"><path d="M8 0h2v2h-2zM4 4h2v2h-2zM8 4h2v2h-2zM0 8h2v2h-2zM4 8h2v2h-2zM8 8h2v2h-2z" fill="#999"/></svg>
</div>
</body>
</html>
```
FILE: styles.css
```css
* { box-sizing: border-box; }
html, body { margin: 0; width: 1920px; height: 1080px; overflow: hidden; }
body { display: flex; flex-direction: column; position: relative; background: #f0f0f0; color: #111; font: 14px "Open Sans", "Noto Sans", sans-serif; }
svg { display: block; flex: none; }
i, b { font-style: normal; flex: none; }
.defs { position: absolute; width: 0; height: 0; }
.bar > svg, .tbicons svg, .instruments svg, .cascade svg { shape-rendering: crispEdges; }
.bar-probe > svg, .bar > .wrench { shape-rendering: auto; }

/* title and menus */
.titlebar { height: 24px; flex: none; display: flex; align-items: center; background: linear-gradient(90deg, #f2f3fa, #eef3fc); border-bottom: 1px solid #a0a0a0; padding-left: 2px; }
.appicon { width: 16px; height: 16px; }
.titletext { margin-left: 5px; white-space: nowrap; font-size: 14.600px; letter-spacing: -.075px; }
.winctl { width: 110px; height: 22px; margin-left: auto; margin-right: 16px; margin-top: -2px; }
.menubar { height: 30px; flex: none; display: flex; align-items: center; border-top: 1px solid #fff; border-bottom: 1px solid #a0a0a0; padding-left: 3px; }
.menuicon { width: 17px; height: 17px; margin-top: -2px; }
.menus { display: grid; grid-template-columns: 36px 39px 45px 48px 45px 71px 66px 49px 64px 65px 68px 60px; margin: -2px 0 0 8px; font-size: 14.200px; letter-spacing: -.1px; }
.menus u { text-underline-offset: 2px; }
.mdictl { margin-left: auto; margin-right: 3px; margin-top: 10px; display: flex; gap: 2px; }
.mdictl i { width: 14px; height: 15px; border: 1px solid #fff; border-right-color: #666; border-bottom-color: #666; }
.mdictl svg { width: 12px; height: 12px; }

/* toolbars */
.row { height: 31px; flex: none; display: flex; }
.bar { height: 31px; flex: none; display: flex; align-items: center; border: 1px solid #fff; border-right-color: #a0a0a0; border-bottom-color: #a0a0a0; }
.bar > svg { width: 18px; height: 18px; margin: 0 2px; }
.bar > b { width: 1px; height: 24px; background: #a0a0a0; margin: 0 3.500px; }
.bar > .on { width: 20px; height: 24px; padding: 2px 0; margin: 0 1px; border: 1px solid #a0a0a0; border-right-color: #fff; border-bottom-color: #fff; background: #f6f6f6; }
.bar-std { width: 280px; padding-left: 11px; border-left: 0; }
.bar-main { width: 524px; margin-left: 47px; padding-left: 11px; }
.bar-zoom { width: 124px; margin-left: 505px; padding-left: 10px; }
.combo { width: 138px; height: 25px; flex: none; margin: 0 0 0 3px; padding: 0 7px 0 4px; display: flex; justify-content: space-between; align-items: center; white-space: nowrap; background: #fff; border: 1px solid #ccc; font-size: 13.500px; letter-spacing: -.05px; }
.combo svg { width: 10px; height: 10px; }
.bar > .wideb { margin: 0 5px 0 14px; }
.dd { width: 8px; height: 0; border-top: 4px solid #000; border-left: 4px solid transparent; border-right: 4px solid transparent; margin: 0 5px 0 -1px; }
.bar-comp { width: 470px; padding-left: 11px; border-left: 0; }
.bar-sim { width: 249px; margin-left: 107px; padding-left: 10px; }
.bar-sim > .wrench { margin: 0 0 4px; }
.inter { margin: -4px 0 0 1px; }
.bar-probe { width: 190px; margin-left: 8px; padding-left: 10px; }
.pix { font: bold 6.500px "Liberation Mono", monospace; }
.pixb { font: bold 9px "Liberation Mono", monospace; }
.pr { font: bold 8px "Liberation Sans", sans-serif; fill: #5d8c59; }
.pr.w { fill: #fff; }

/* work area */
.work { height: 746px; flex: none; display: flex; border-top: 1px solid #6d6d6d; }
.toolbox { width: 212px; padding: 3px 0 0 3px; border-right: 1px solid #6d6d6d; height: 742px; }
.tbhead { display: flex; align-items: center; height: 25px; width: 198px; gap: 3px; }
.tbhead span { width: 165px; height: 25px; line-height: 22px; padding-left: 4px; font-size: 14.500px; background: linear-gradient(90deg, #bfcddb, #d7e4f2); }
.sb { width: 14px; height: 14px; border: 1px solid #fff; border-right-color: #555; border-bottom-color: #555; display: block; font: bold 14px/11px "Liberation Sans", sans-serif; text-align: center; color: #000; }
.up::after { content: ""; display: block; margin: 4px auto 0; width: 0; border: 3px solid transparent; border-bottom-color: #999; border-top: 0; }
.rt::after { content: ""; display: block; margin: 3px 0 0 5px; width: 0; border: 3px solid transparent; border-left-color: #999; border-right: 0; }
.tbframe { margin: 3px 0 0 1px; width: 197px; height: 686px; border: 1px solid #fff; border-right: 2px solid #777; border-bottom: 2px solid #777; border-left-color: #ccc; }
.tbicons { height: 26px; display: flex; align-items: center; padding: 2px 4px 0; gap: 8px; }
.tbicons svg { width: 18px; height: 18px; }
.tbicons .last { margin-left: auto; }
.tree { height: 656px; border: 1px solid #828790; background: #fff; padding: 2px 2px 2px 1px; margin-right: 1px; display: flex; flex-direction: column; overflow: hidden; }
.ti { height: 18px; line-height: 18px; white-space: nowrap; overflow: hidden; font-size: 14.400px; letter-spacing: -.05px; padding-left: 0; }
.ti.sel { background: #f0f0f0; padding-left: 2px; }
.hs { margin-top: auto; height: 17px; background: #f0f0f0; }
.hs i { display: block; width: 62px; height: 2px; margin: 7px 0 0 37px; background: #858585; }
.tabs { display: flex; font-size: 10.400px; white-space: nowrap; letter-spacing: -.15px; }
.tabs span { height: 18px; line-height: 17px; padding: 0 4px; border: 1px solid #fff; border-right: 2px solid #777; border-bottom: 2px solid #777; flex: none; }
.tabs .act { height: 20px; line-height: 20px; border-top-color: #f0f0f0; }
.lt { margin-left: 2px; gap: 2px; }
.lt span:nth-child(1) { width: 59px; } .lt span:nth-child(2) { width: 47px; margin-left: -2px; } .lt span:nth-child(3) { width: 70px; padding-left: 3px; }
.mdi { width: 1682px; display: flex; flex-direction: column; padding: 3px 0 0 4px; height: 746px; border-right: 1px solid #6d6d6d; }
.docframe { height: 712px; display: grid; grid-template-columns: 1653px 18px; grid-template-rows: 686px 17px; border-top: 2px solid #6d6d6d; border-left: 2px solid #6d6d6d; border-right: 1px solid #fff; width: 1673px; align-content: start; }
.vscroll i { display: block; width: 2px; height: 353px; margin: 16px 0 0 8px; background: #858585; }
.hscroll { grid-column: 1 / 3; border-bottom: 1px solid #ddd; }
.hscroll i { display: block; width: 1592px; height: 2px; margin: 7px 0 0 17px; background: #858585; }
.doctabs { display: flex; justify-content: space-between; border-top: 1px solid #6d6d6d; margin: -2px 0 0 -4px; padding-left: 3px; height: 31px; }
.doctab { width: 436px; height: 26px; margin-top: -1px; background: #f0f0f0; border-right: 2px solid #222; border-bottom: 2px solid #222; border-left: 1px solid #fff; display: flex; align-items: center; padding: 4px 0 0 2px; white-space: nowrap; font-size: 14.600px; letter-spacing: -.04px; }
.doctab svg { width: 17px; height: 17px; margin-right: 4px; }
.cascade { width: 15px; height: 15px; margin: 7px 3px 0 0; border: 1px solid #fff; border-right-color: #666; border-bottom-color: #666; }
.cascade svg { width: 13px; height: 13px; }
.canvas text { white-space: pre; }
.canvas .rul text { font: 16.500px "Liberation Sans", Arial, sans-serif; fill: #808080; text-anchor: middle; }
.wire { stroke: #f00; }
.lab text { font: bold 23px "Liberation Sans", Arial, sans-serif; }
.lab text.head { font-size: 27.500px; fill: #f00; }
.mono { font: bold 22px "Liberation Mono", monospace; }
.info text { font: bold 22px Carlito, Calibri, Lato, sans-serif; }
.instruments { width: 26px; height: 503px; padding: 15px 0 0 4px; display: flex; flex-direction: column; gap: 6px; border-right: 1px solid #a0a0a0; border-bottom: 1px solid #a0a0a0; }
.instruments svg { width: 16px; height: 15px; }
.instruments b { width: 22px; height: 1px; margin: 1px 0 1px -4px; background: #a0a0a0; }
.instruments .ar { height: 9px; margin: -3px 0 -1px; }
.ag { font: bold 7px "Liberation Mono", monospace; fill: #00d; }

/* spreadsheet view */
.sheet { height: 147px; flex: none; display: flex; border-top: 2px solid #888; border-bottom: 1px solid #a0a0a0; margin-top: -1px; }
.sidecap { width: 30px; padding: 2px 0 0 7px; display: flex; flex-direction: column; gap: 2px; }
.vcap { margin: 1px 0 0 -5px; width: 25px; height: 105px; background: linear-gradient(#d7e4f2, #bfcddb); display: flex; overflow: hidden; justify-content: flex-end; flex-direction: column; }
.vcap span { writing-mode: vertical-rl; transform: rotate(180deg); white-space: nowrap; font-size: 14px; line-height: 17px; padding-top: 4px; height: 118px; flex: none; }
.sheetmain { width: 1885px; }
.log { margin: 7px 4px 0 2px; height: 108px; background: #fff; border: 1px solid #828790; padding: 4px 23px; font-size: 14.200px; word-spacing: .6px; }
.bt { border-top: 2px solid #888; margin-top: 3px; padding-left: 2px; gap: 2px; }
.bt .act { width: 48px; margin-top: -2px; height: 22px; line-height: 24px; }
.bt span:nth-child(2) { width: 40px; margin-left: -2px; padding-left: 3px; } .bt span:nth-child(3) { width: 70px; padding-left: 3px; } .bt span:nth-child(4) { width: 77px; padding-left: 4px; } .bt span:nth-child(5) { width: 59px; padding-left: 3px; }

/* status bar */
.status { height: 24px; flex: none; display: flex; border-top: 1px solid #fff; padding-top: 2px; align-items: stretch; line-height: 21px; }
.c1 { width: 1490px; padding-left: 1342px; border-right: 1px solid #d2d2d2; }
.c2 { width: 183px; border-right: 1px solid #d2d2d2; }
.c3 { width: 183px; padding-left: 5px; border-right: 1px solid #d2d2d2; }
.c4 { display: flex; gap: 2px; padding: 4px 0 3px 4px; }
.c4 i { width: 6px; border: 1px solid #a0a0a0; border-right-color: #ddd; border-bottom-color: #ddd; background: #e6e6e6; }

/* taskbar */
.taskbar { height: 48px; flex: none; display: flex; position: relative; color: #fff; }
.wall { position: absolute; inset: 0; width: 1920px; height: 48px; }
.weather, .center, .tray { position: relative; display: flex; align-items: center; }
.weather { width: 551px; padding-left: 19px; gap: 7px; font-size: 11.500px; line-height: 16px; }
.weather svg { width: 24px; height: 24px; }
.dim { color: #c5cad2; }
.center { width: 830px; }
.win { width: 23px; height: 23px; }
.search { width: 220px; height: 32px; margin: 0 2px 0 13px; border-radius: 16px; background: rgba(110, 110, 190, .38); border: 1px solid rgba(180, 180, 255, .3); display: flex; align-items: center; padding: 1px 0 0 11px; gap: 10px; font-size: 15.800px; color: #e2e4f2; }
.search svg { width: 15px; height: 15px; }
.apps { display: flex; }
.apps span { width: 40px; height: 40px; margin: 0 2px; display: flex; align-items: center; justify-content: center; position: relative; border-radius: 4px; }
.apps svg { width: 24px; height: 24px; }
.run::after, .cur::after { content: ""; position: absolute; bottom: 1px; left: 17px; width: 6px; height: 3px; border-radius: 2px; background: #9aa0b4; }
.cur { background: rgba(120, 150, 240, .18); border: 1px solid rgba(150, 170, 255, .2); }
.cur::after { left: 11px; bottom: 0; width: 16px; background: #4cc2ff; }
.qb { font: 15px "Open Sans", sans-serif; fill: #fff; text-anchor: middle; }
.tray { width: 539px; padding-left: 290px; }
.chev { width: 12px; height: 8px; }
.net { width: 66px; height: 18px; margin-left: 17px; }
.clock { width: 68px; margin-left: 4px; text-align: right; font-size: 11.800px; line-height: 16px; letter-spacing: -.05px; }
.bell { width: 16px; height: 16px; margin-left: 6px; }
.copilot { width: 24px; height: 24px; margin-left: 16px; }
.pre { font: bold 6.500px "Liberation Sans", sans-serif; fill: #222; }

/* floating multimeter window */
.meter { position: absolute; left: 296px; top: 805px; width: 180px; height: 168px; background: #f0f0f0; border: 1px solid #b5b5b5; border-radius: 8px; box-shadow: 0 12px 26px rgba(0, 0, 0, .32), 0 2px 10px rgba(0, 0, 0, .15); }
.mhead { height: 31px; display: flex; align-items: center; justify-content: space-between; padding: 0 8px 3px 7px; color: #999; font-size: 14.800px; background: #f3f3f3; border-radius: 8px 8px 0 0; letter-spacing: -.1px; }
.mhead svg { width: 12px; height: 12px; }
.disp { height: 30px; border: 2px solid #888; border-top-width: 1px; box-shadow: inset 0 0 0 2px #fff; padding: 2px; background: #000 content-box; color: #fff; text-align: center; font: 15.500px/23px "Liberation Sans", Arial, sans-serif; }
.grp { display: flex; align-items: center; border: 1px solid #dcdcdc; margin: 0 auto; }
.meter button { height: 20px; padding: 0; background: #fdfdfd; border: 1px solid #d0d0d0; border-radius: 4px; font: 10.500px "Open Sans", sans-serif; color: #000; display: flex; align-items: center; justify-content: center; }
.meter button.p { background: #cce4f7; border-color: #005499; }
.g1 { width: 168px; height: 28px; margin-top: 9px; padding-left: 11px; gap: 9.500px; }
.g1 button { width: 28px; }
.g1 button:last-child { width: 30px; }
.g2 { width: 116px; height: 25px; margin-top: -1px; padding-left: 8px; gap: 13px; }
.g2 button { height: 14px; width: 43px; margin-top: 1px; }
.g2 button.p { width: 40px; }
.g2 svg { width: 24px; height: 10px; }
.ends { display: flex; justify-content: space-between; align-items: flex-start; padding: 7px 7px 0 5px; }
.ends button { width: 71px; height: 17px; margin: 6px 0 0 2px; }
.term { width: 14px; font-size: 12px; line-height: 16px; display: flex; flex-direction: column; align-items: center; }
.term em { font-style: normal; margin: 2px 0 -1px 5px; }
.term i { width: 13px; height: 13px; border: 4px solid #c0c0c0; border-radius: 50%; background: #fff; }
.grip { position: absolute; right: 1px; bottom: 1px; width: 10px; height: 10px; }
```
